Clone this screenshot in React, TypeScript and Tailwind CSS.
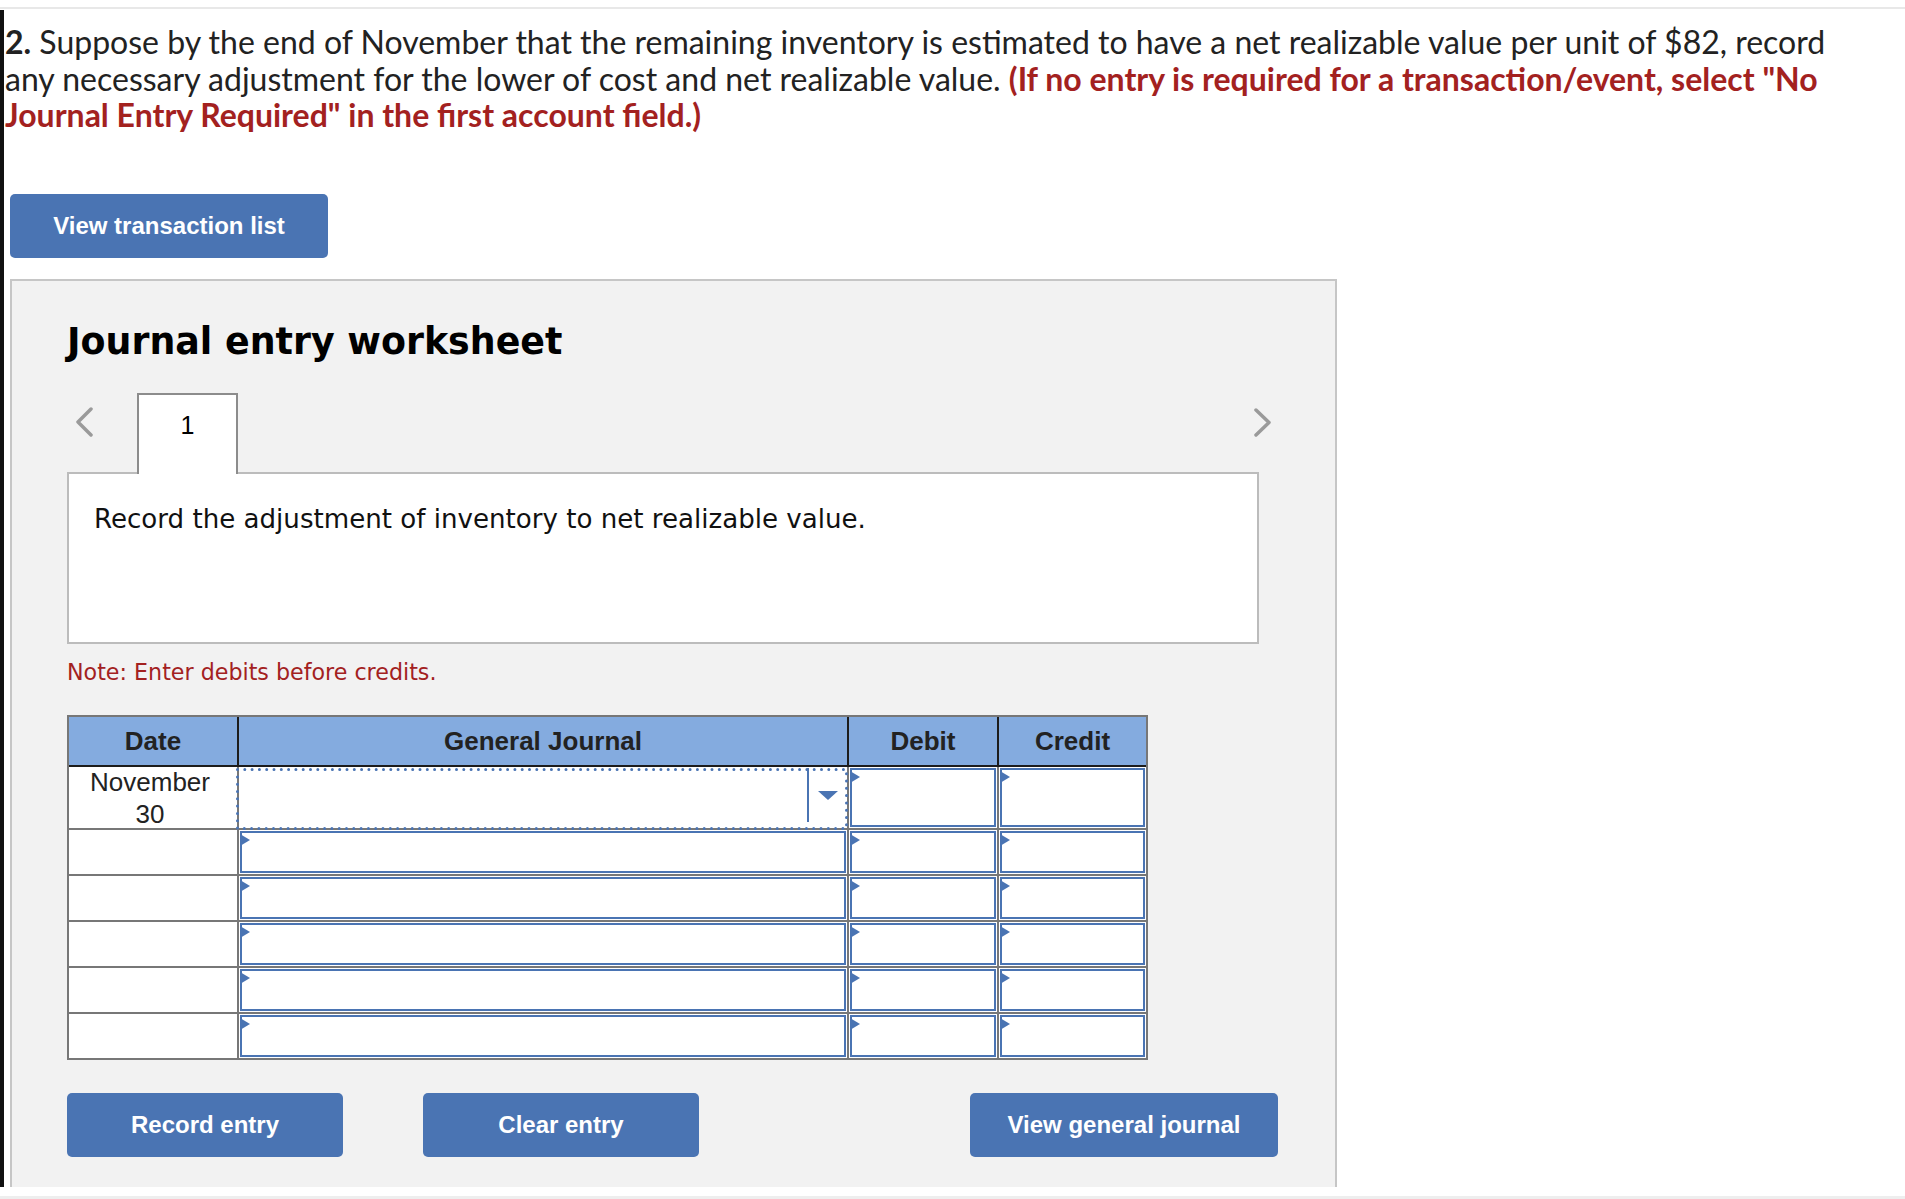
import React from "react";

const BLUE = "#4a74b3";

function InputBox() {
  return (
    <div className="h-full border-2 border-[#4a74b3] bg-white relative">
      <div className="absolute left-[-2px] top-[1px] w-0 h-0 border-y-[6px] border-y-transparent border-l-[10px] border-l-[#4a74b3]" />
    </div>
  );
}

function ChevronLeftIcon() {
  return (
    <svg width="18" height="30" viewBox="0 0 18 30" className="block">
      <polyline points="16,2 3,15 16,28" fill="none" stroke="#9a9a9a" strokeWidth="3.5" strokeLinecap="round" strokeLinejoin="round" />
    </svg>
  );
}

function ChevronRightIcon() {
  return (
    <svg width="17" height="29" viewBox="0 0 17 29" className="block">
      <polyline points="2,2 15,14.5 2,27" fill="none" stroke="#9a9a9a" strokeWidth="3.5" strokeLinecap="round" strokeLinejoin="round" />
    </svg>
  );
}

export default function App() {
  const rows = [0, 1, 2, 3, 4, 5];
  return (
    <div className="w-[1905px] h-[1199px] bg-white overflow-hidden font-['Liberation_Sans',Arial,sans-serif]">
      <div className="h-[7px]" />
      <div className="h-[2px] bg-[#e8e8e8]" />
      <div className="h-[1px]" />
      <div className="h-[1177px] border-l-[4px] border-[#111] overflow-hidden">
        {/* question text */}
        <div className="mt-[14px] ml-[1px] h-[110px] text-[32px] leading-[36.5px] text-[#222] font-['Lato',sans-serif] whitespace-nowrap">
          <span className="font-bold">2.</span> Suppose by the end of November that the remaining inventory is estimated to have a net realizable value per unit of $82, record
          <br />
          any necessary adjustment for the lower of cost and net realizable value.{" "}
          <span className="font-bold text-[#a3211f]">(If no entry is required for a transaction/event, select "No</span>
          <br />
          <span className="font-bold text-[#a3211f]">Journal Entry Required" in the first account field.)</span>
        </div>

        <button className="mt-[60px] ml-[6px] w-[318px] h-[64px] rounded-[5px] bg-[#4a74b3] text-white text-[24px] font-bold flex items-center justify-center">
          View transaction list
        </button>

        {/* worksheet panel */}
        <div className="mt-[21px] ml-[6px] w-[1327px] h-[920px] border-2 border-[#c6c6c6] bg-[#f2f2f2] pl-[55px] pt-[40px]">
          <h2 className="text-[36.4px] leading-[42px] font-bold text-black font-['DejaVu_Sans',Verdana,sans-serif]">
            Journal entry worksheet
          </h2>

          {/* tab row */}
          <div className="mt-[30px] w-[1204px] h-[79px] flex items-start">
            <div className="ml-[8px] mt-[14px]">
              <ChevronLeftIcon />
            </div>
            <div className="ml-[44px] w-[101px] h-[81px] border-2 border-b-0 border-[#8c8c8c] bg-white relative z-10 pt-[15px] text-center text-[25px] leading-[30px] text-black">
              1
            </div>
            <div className="ml-auto mt-[15px]">
              <ChevronRightIcon />
            </div>
          </div>

          <div className="w-[1192px] h-[172px] border-2 border-[#bcbcbc] bg-white pt-[29px] pl-[25px] text-[26.1px] leading-[32px] text-[#111] font-['DejaVu_Sans',Verdana,sans-serif]">
            Record the adjustment of inventory to net realizable value.
          </div>

          <div className="mt-[14px] text-[22.2px] leading-[28px] text-[#a3211f] font-['DejaVu_Sans',Verdana,sans-serif]">
            Note: Enter debits before credits.
          </div>

          {/* journal table */}
          <div className="mt-[29px] w-[1081px] border-2 border-[#777] bg-white">
            <div className="flex h-[50px] bg-[#84abdf] border-b-2 border-[#1c1c1c] text-[26px] font-bold text-[#222]">
              <div className="w-[170px] border-r-2 border-[#1c1c1c] flex items-center justify-center">Date</div>
              <div className="w-[610px] border-r-2 border-[#1c1c1c] flex items-center justify-center">General Journal</div>
              <div className="w-[150px] border-r-2 border-[#1c1c1c] flex items-center justify-center">Debit</div>
              <div className="flex-1 flex items-center justify-center">Credit</div>
            </div>
            {rows.map((i) => (
              <div
                key={i}
                className={
                  i === 0
                    ? "flex h-[63px] border-b-2 border-[#777]"
                    : i === 5
                    ? "flex h-[44px]"
                    : "flex h-[46px] border-b-2 border-[#777]"
                }
              >
                <div className="w-[170px] border-r-2 border-[#777] flex items-center justify-center pr-[6px] text-center text-[26px] leading-[32px] text-[#222]">
                  {i === 0 ? (
                    <span>
                      November
                      <br />
                      30
                    </span>
                  ) : null}
                </div>
                <div className="w-[610px] border-r-2 border-[#777] relative p-[1px]">
                  {i === 0 ? (
                    <div className="absolute left-[-3px] top-[1px] w-[612px] h-[62px] z-10">
                      <svg width="612" height="62" className="absolute inset-0">
                        <rect x="1.5" y="1.5" width="609" height="59" fill="none" stroke={BLUE} strokeWidth="3" strokeDasharray="0 7.3" strokeLinecap="round" />
                      </svg>
                      <div className="absolute left-[571px] top-[0px] w-[2px] h-[54px] bg-[#4a74b3]" />
                      <div className="absolute left-[582px] top-[23px] w-0 h-0 border-x-[10px] border-x-transparent border-t-[9px] border-t-[#4a74b3]" />
                    </div>
                  ) : (
                    <InputBox />
                  )}
                </div>
                <div className="w-[150px] border-r-2 border-[#777] p-[1px]">
                  <InputBox />
                </div>
                <div className="flex-1 p-[1px]">
                  <InputBox />
                </div>
              </div>
            ))}
          </div>

          {/* action buttons */}
          <div className="mt-[33px] flex">
            <button className="w-[276px] h-[64px] rounded-[5px] bg-[#4a74b3] text-white text-[24px] font-bold flex items-center justify-center">
              Record entry
            </button>
            <button className="ml-[80px] w-[276px] h-[64px] rounded-[5px] bg-[#4a74b3] text-white text-[24px] font-bold flex items-center justify-center">
              Clear entry
            </button>
            <button className="ml-[271px] w-[308px] h-[64px] rounded-[5px] bg-[#4a74b3] text-white text-[24px] font-bold flex items-center justify-center">
              View general journal
            </button>
          </div>
        </div>
      </div>
      <div className="h-[9px]" />
      <div className="h-[3px] bg-[#eeeeee]" />
    </div>
  );
}
